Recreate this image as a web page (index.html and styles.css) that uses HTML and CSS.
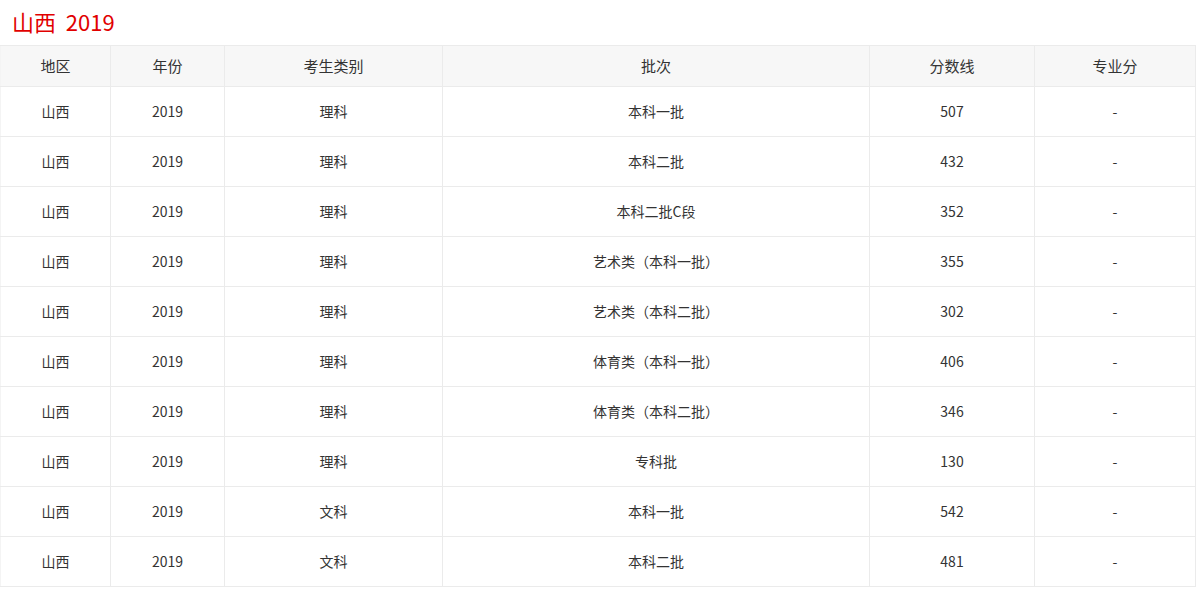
FILE: index.html
```html
<!DOCTYPE html>
<html lang="zh">
<head>
<meta charset="utf-8">
<link rel="stylesheet" href="styles.css">
</head>
<body>
<h2 class="title">山西&nbsp;&nbsp;2019</h2>
<table class="score">
<colgroup>
<col class="c1"><col class="c2"><col class="c3"><col class="c4"><col class="c5"><col class="c6">
</colgroup>
<thead>
<tr><th>地区</th><th>年份</th><th>考生类别</th><th>批次</th><th>分数线</th><th>专业分</th></tr>
</thead>
<tbody>
<tr><td>山西</td><td>2019</td><td>理科</td><td>本科一批</td><td>507</td><td>-</td></tr>
<tr><td>山西</td><td>2019</td><td>理科</td><td>本科二批</td><td>432</td><td>-</td></tr>
<tr><td>山西</td><td>2019</td><td>理科</td><td>本科二批C段</td><td>352</td><td>-</td></tr>
<tr><td>山西</td><td>2019</td><td>理科</td><td>艺术类（本科一批）</td><td>355</td><td>-</td></tr>
<tr><td>山西</td><td>2019</td><td>理科</td><td>艺术类（本科二批）</td><td>302</td><td>-</td></tr>
<tr><td>山西</td><td>2019</td><td>理科</td><td>体育类（本科一批）</td><td>406</td><td>-</td></tr>
<tr><td>山西</td><td>2019</td><td>理科</td><td>体育类（本科二批）</td><td>346</td><td>-</td></tr>
<tr><td>山西</td><td>2019</td><td>理科</td><td>专科批</td><td>130</td><td>-</td></tr>
<tr><td>山西</td><td>2019</td><td>文科</td><td>本科一批</td><td>542</td><td>-</td></tr>
<tr><td>山西</td><td>2019</td><td>文科</td><td>本科二批</td><td>481</td><td>-</td></tr>
</tbody>
</table>
</body>
</html>
```
FILE: styles.css
```css
html, body {
  margin: 0;
  padding: 0;
  background: #fff;
}
body {
  font-family: "Noto Sans CJK SC", "Noto Sans", sans-serif;
  color: #333;
}
.title {
  margin: 0;
  padding: 6px 0 0 12px;
  height: 45px;
  box-sizing: border-box;
  font-size: 22px;
  font-weight: normal;
  line-height: 30px;
  color: #e10000;
}
.score {
  border-collapse: collapse;
  table-layout: fixed;
  width: 1195px;
  font-size: 14px;
}
.c1 { width: 110px; }
.c2 { width: 114px; }
.c3 { width: 218px; }
.c4 { width: 427px; }
.c5 { width: 165px; }
.c6 { width: 161px; }
.score th, .score td {
  border: 1px solid #ebebeb;
  text-align: center;
  padding: 0 0 2px 0;
}
.score thead tr { height: 41px; }
.score th {
  background: #f7f7f7;
  font-weight: normal;
  font-size: 15px;
  color: #333;
}
.score tbody tr { height: 50px; }
.score td { color: #333; }
.score th:first-child, .score td:first-child { border-left-color: #f4f4f4; }
```
